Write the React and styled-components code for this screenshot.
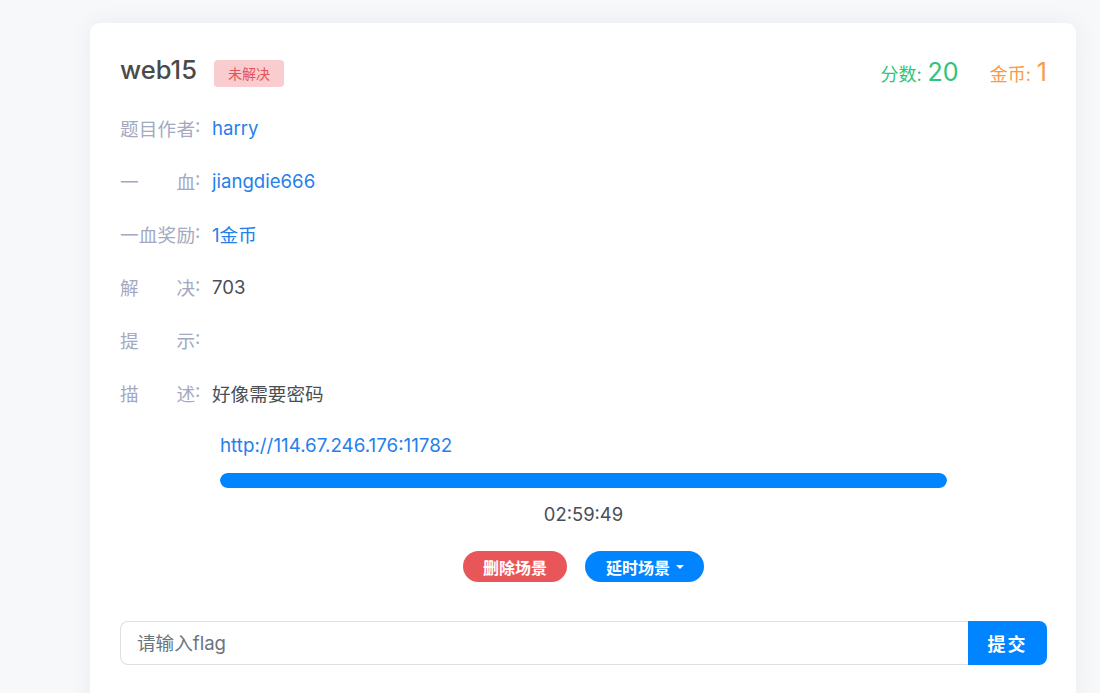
import React from "react";
import styled, { createGlobalStyle } from "styled-components";

const Global = createGlobalStyle`
  html, body { margin: 0; padding: 0; }
  body {
    background: #f7f8fa;
    font-family: Inter, "Noto Sans CJK SC", "Noto Sans", sans-serif;
    color: #4a4f55;
    overflow: hidden;
  }
`;

const Page = styled.div`
  height: 693px;
  padding: 23px 24px 0 90px;
  box-sizing: border-box;
`;

const Card = styled.div`
  background: #fff;
  border-radius: 10px;
  box-shadow: 0 0 24px rgba(30, 40, 60, 0.06);
  padding: 30px 29px 40px 30px;
  width: 986px;
  box-sizing: border-box;
`;

const Header = styled.div`
  display: flex;
  align-items: center;
  justify-content: space-between;
  height: 34px;
  margin-bottom: 27px;
`;

const TitleGroup = styled.div`
  display: flex;
  align-items: center;
  gap: 17px;
`;

const Title = styled.h2`
  margin: 0;
  font-size: 25.5px;
  font-weight: 500;
  color: #4a4a4a;
  line-height: 34px;
`;

const Badge = styled.span`
  display: inline-flex;
  align-items: center;
  justify-content: center;
  width: 70px;
  height: 27px;
  margin-top: 6px;
  border-radius: 4px;
  background: #f9cdd0;
  color: #e5525a;
  font-size: 14px;
`;

const Stats = styled.div`
  display: flex;
  align-items: baseline;
  gap: 31px;
  margin-top: 4px;
`;

const Stat = styled.span`
  color: ${(p) => p.$color};
  font-size: 18px;
  b {
    font-weight: 400;
    font-size: 25px;
    margin-left: 6px;
  }
`;

const Row = styled.div`
  display: flex;
  align-items: center;
  height: 27px;
  font-size: 18.6px;
  margin-bottom: 26px;
`;

const Label = styled.span`
  display: flex;
  width: 92px;
  color: #a3a9bf;
  flex-shrink: 0;
`;

const LabelText = styled.span`
  width: 75px;
  text-align: justify;
  text-align-last: justify;
`;

const Value = styled.span`
  color: ${(p) => (p.$link ? "#2680eb" : "#4a4f55")};
`;

const Env = styled.div`
  padding: 0 100px;
  display: flex;
  flex-direction: column;
  align-items: stretch;
  margin-top: 1px;
`;

const Url = styled.a`
  color: #2680eb;
  font-size: 18.8px;
  line-height: 27px;
  text-decoration: none;
`;

const Progress = styled.div`
  margin-top: 14px;
  height: 15px;
  border-radius: 8px;
  background: #e9ecef;
  overflow: hidden;
`;

const Fill = styled.div`
  height: 100%;
  background: #0084ff;
  border-radius: 8px;
`;

const Timer = styled.div`
  margin-top: 13px;
  text-align: center;
  font-size: 18.4px;
  line-height: 27px;
  color: #4a4f55;
`;

const Actions = styled.div`
  display: flex;
  justify-content: center;
  gap: 18px;
  margin-top: 23px;
`;

const Pill = styled.button`
  height: 31px;
  padding: 0 ${(p) => (p.$caret ? "20px 0 21px" : "20px")};
  border: none;
  border-radius: 16px;
  background: ${(p) => p.$bg};
  color: #fff;
  font-family: inherit;
  font-size: 16px;
  font-weight: 700;
  display: inline-flex;
  align-items: center;
  gap: 6px;
  cursor: pointer;
`;

const Caret = styled.span`
  width: 0;
  height: 0;
  border-left: 4px solid transparent;
  border-right: 4px solid transparent;
  border-top: 4px solid #fff;
`;

const FlagForm = styled.div`
  display: flex;
  margin-top: 39px;
  height: 44px;
`;

const Input = styled.input`
  flex: 1;
  height: 44px;
  box-sizing: border-box;
  border: 1px solid #dcdfe3;
  border-right: none;
  border-radius: 8px 0 0 8px;
  padding: 0 16px;
  font-family: inherit;
  font-size: 18.6px;
  color: #4a4f55;
  outline: none;
  &::placeholder { color: #6c757d; }
`;

const Submit = styled.button`
  width: 79px;
  height: 44px;
  border: none;
  border-radius: 0 8px 8px 0;
  background: #0084ff;
  color: #fff;
  font-family: inherit;
  font-size: 18px;
  font-weight: 700;
  letter-spacing: 2px;
  cursor: pointer;
`;

const rows = [
  { label: "题目作者", value: "harry", link: true },
  { label: "一血", value: "jiangdie666", link: true },
  { label: "一血奖励", value: "1金币", link: true },
  { label: "解决", value: "703" },
  { label: "提示", value: "" },
  { label: "描述", value: "好像需要密码" },
];

export default function App() {
  return (
    <>
      <Global />
      <Page>
        <Card>
          <Header>
            <TitleGroup>
              <Title>web15</Title>
              <Badge>未解决</Badge>
            </TitleGroup>
            <Stats>
              <Stat $color="#2fc47a">分数:<b>20</b></Stat>
              <Stat $color="#fb9a46">金币:<b>1</b></Stat>
            </Stats>
          </Header>
          {rows.map((r) => (
            <Row key={r.label}>
              <Label>
                <LabelText>{r.label}</LabelText>:
              </Label>
              <Value $link={r.link}>{r.value}</Value>
            </Row>
          ))}
          <Env>
            <Url href="#">http://114.67.246.176:11782</Url>
            <Progress>
              <Fill style={{ width: "100%" }} />
            </Progress>
            <Timer>02:59:49</Timer>
          </Env>
          <Actions>
            <Pill $bg="#e9565a">删除场景</Pill>
            <Pill $bg="#0084ff" $caret>
              延时场景<Caret />
            </Pill>
          </Actions>
          <FlagForm>
            <Input placeholder="请输入flag" />
            <Submit>提交</Submit>
          </FlagForm>
        </Card>
      </Page>
    </>
  );
}
